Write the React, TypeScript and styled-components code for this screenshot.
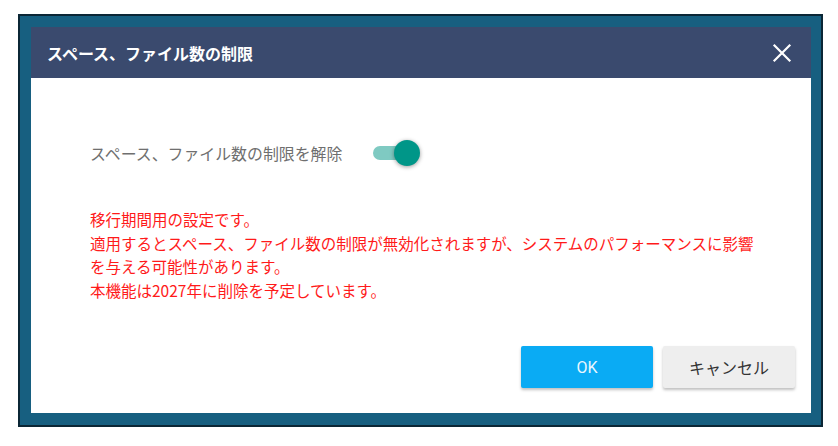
import React, { useState } from "react";
import styled, { createGlobalStyle } from "styled-components";

const GlobalStyle = createGlobalStyle`
  body {
    margin: 0;
    background: #ffffff;
    font-family: "Noto Sans CJK JP", "Noto Sans", sans-serif;
  }
`;

const App: React.FC = () => {
  const [unlimited, setUnlimited] = useState(true);

  return (
    <Page>
      <GlobalStyle />
      <Frame>
        <Dialog>
          <Header>
            <Title>スペース、ファイル数の制限</Title>
            <CloseButton aria-label="close">
              <svg width="20" height="20" viewBox="0 0 20 20">
                <path d="M2.5 2.5 L17.5 17.5 M17.5 2.5 L2.5 17.5" stroke="#ffffff" strokeWidth="2.2" strokeLinecap="square" />
              </svg>
            </CloseButton>
          </Header>
          <Body>
            <SettingRow>
              <Label>スペース、ファイル数の制限を解除</Label>
              <Switch $on={unlimited} onClick={() => setUnlimited(!unlimited)}>
                <Track $on={unlimited} />
                <Thumb $on={unlimited} />
              </Switch>
            </SettingRow>
            <Warning>
              移行期間用の設定です。
              <br />
              適用するとスペース、ファイル数の制限が無効化されますが、システムのパフォーマンスに影響
              <br />
              を与える可能性があります。
              <br />
              本機能は2027年に削除を予定しています。
            </Warning>
            <Footer>
              <Button $primary>OK</Button>
              <Button>キャンセル</Button>
            </Footer>
          </Body>
        </Dialog>
      </Frame>
    </Page>
  );
};

export default App;

const Page = styled.div`
  padding: 14px 0 0 18px;
`;
const Frame = styled.div`
  width: 805px;
  box-sizing: border-box;
  background: #175f80;
  border: 2px solid #0b2635;
  padding: 11px 10px 12px 11px;
`;
const Dialog = styled.div`
  width: 780px;
  height: 386px;
  background: #ffffff;
  display: flex;
  flex-direction: column;
`;
const Header = styled.div`
  height: 51px;
  background: #3a4a6e;
  display: flex;
  align-items: center;
  justify-content: space-between;
  padding: 0 19px 0 16px;
`;
const Title = styled.span`
  color: #ffffff;
  font-size: 16px;
  font-weight: 700;
`;
const CloseButton = styled.button`
  border: none;
  background: transparent;
  padding: 0;
  display: flex;
  cursor: pointer;
`;
const Body = styled.div`
  flex: 1;
  display: flex;
  flex-direction: column;
  padding: 62px 16px 25px 59px;
`;
const SettingRow = styled.div`
  display: flex;
  align-items: center;
  gap: 31px;
  height: 26px;
`;
const Label = styled.span`
  color: #6f6f6f;
  font-size: 15.9px;
`;
const Switch = styled.div<{ $on: boolean }>`
  position: relative;
  width: 47px;
  height: 26px;
  cursor: pointer;
`;
const Track = styled.div<{ $on: boolean }>`
  position: absolute;
  left: 0;
  top: 6px;
  width: 38px;
  height: 14px;
  border-radius: 7px;
  background: ${(p) => (p.$on ? "#7fcac2" : "#bdbdbd")};
`;
const Thumb = styled.div<{ $on: boolean }>`
  position: absolute;
  top: 0;
  left: ${(p) => (p.$on ? "21px" : "0")};
  width: 26px;
  height: 26px;
  border-radius: 50%;
  background: ${(p) => (p.$on ? "#009688" : "#fafafa")};
  box-shadow: 0 1px 4px rgba(0, 0, 0, 0.4);
`;
const Warning = styled.p`
  margin: 42px 0 0;
  color: #ff1a1a;
  font-size: 15.5px;
  line-height: 23.5px;
`;
const Footer = styled.div`
  margin-top: auto;
  display: flex;
  justify-content: flex-end;
  gap: 10px;
`;
const Button = styled.button<{ $primary?: boolean }>`
  width: 132px;
  height: 42px;
  border: none;
  border-radius: 2px;
  font-family: Roboto, "Noto Sans CJK JP", sans-serif;
  font-size: 16px;
  background: ${(p) => (p.$primary ? "#0aabf4" : "#eeeeee")};
  color: ${(p) => (p.$primary ? "#eaf7fe" : "#333333")};
  box-shadow: 0 2px 3px rgba(0, 0, 0, 0.25);
  cursor: pointer;
`;
